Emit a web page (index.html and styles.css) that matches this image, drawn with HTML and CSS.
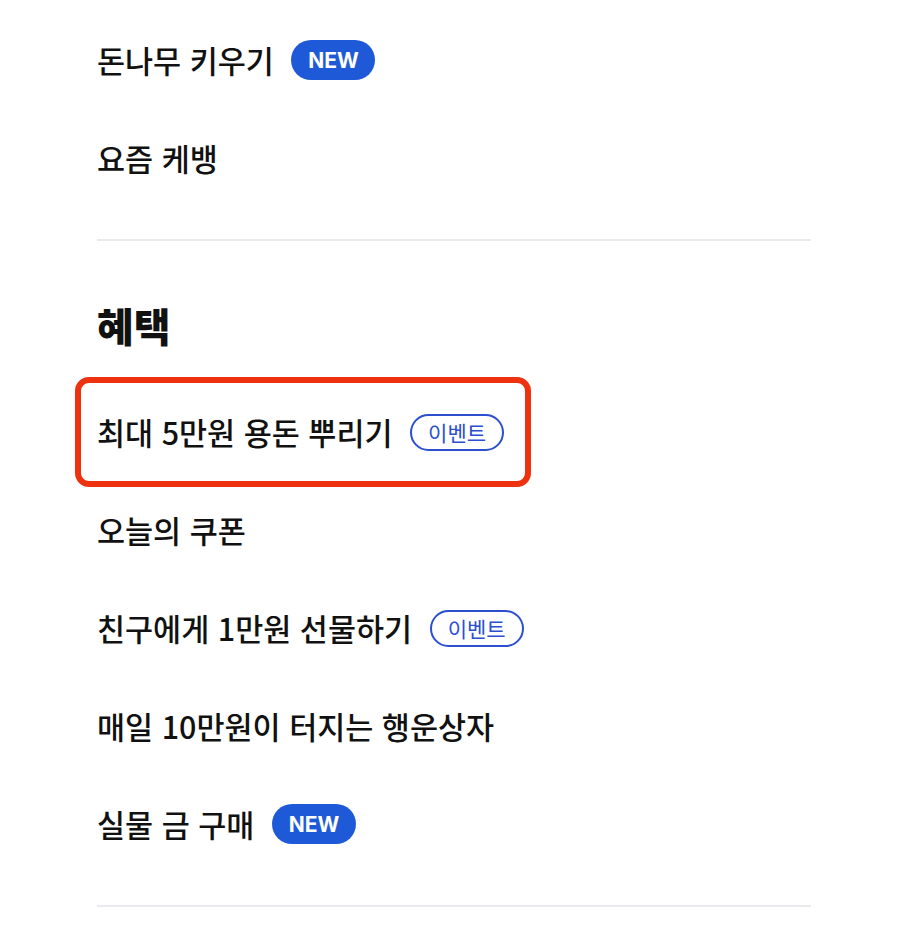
FILE: index.html
```html
<!DOCTYPE html>
<html lang="ko">
<head>
    <meta charset="UTF-8">
    <meta name="viewport" content="width=device-width, initial-scale=1.0">
    <title>메뉴</title>
    <link rel="stylesheet" href="styles.css">
</head>
<body>
    <div class="menu">
        <div class="section first">
            <div class="item">돈나무 키우기 <span class="badge new">NEW</span></div>
            <div class="item">요즘 케뱅</div>
        </div>
        <hr class="divider">
        <div class="section">
            <h2 class="section_title">혜택</h2>
            <div class="item marked">최대 5만원 용돈 뿌리기 <span class="badge event">이벤트</span></div>
            <div class="item">오늘의 쿠폰</div>
            <div class="item">친구에게 1만원 선물하기 <span class="badge event">이벤트</span></div>
            <div class="item">매일 10만원이 터지는 행운상자</div>
            <div class="item">실물 금 구매 <span class="badge new">NEW</span></div>
        </div>
        <hr class="divider">
    </div>
</body>
</html>
```

FILE: styles.css
```css
body { margin: 0; background: #fff; color: #111; font-family: "Noto Sans CJK KR", "Noto Sans", sans-serif; }
.menu { padding: 11px 96px 0 97px; }
.section { display: flex; flex-direction: column; align-items: flex-start; }
.item { position: relative; display: flex; align-items: center; height: 98px; font-size: 30.5px; font-weight: 500; white-space: pre; }
.section_title { margin: 60px 0 34px; font-size: 40px; line-height: 48px; font-weight: 800; }
.divider { margin: 32px 0 0; border: none; height: 2px; background: #e9eaee; }
.badge { display: inline-flex; align-items: center; justify-content: center; margin-left: 9px; border-radius: 999px; box-sizing: border-box; }
.badge.new { width: 84px; height: 40px; background: #1e5ad8; color: #fff; font-family: "Inter", "Noto Sans", sans-serif; font-size: 21px; font-weight: 700; }
.badge.event { width: 94px; height: 37px; border: 2px solid #2b4fcf; color: #2b4fcf; font-size: 21px; font-weight: 400; }
.marked::after { content: ""; position: absolute; top: -6px; bottom: -6px; left: -22px; right: -27px; border: 6px solid #ee3210; border-radius: 14px; }
```
